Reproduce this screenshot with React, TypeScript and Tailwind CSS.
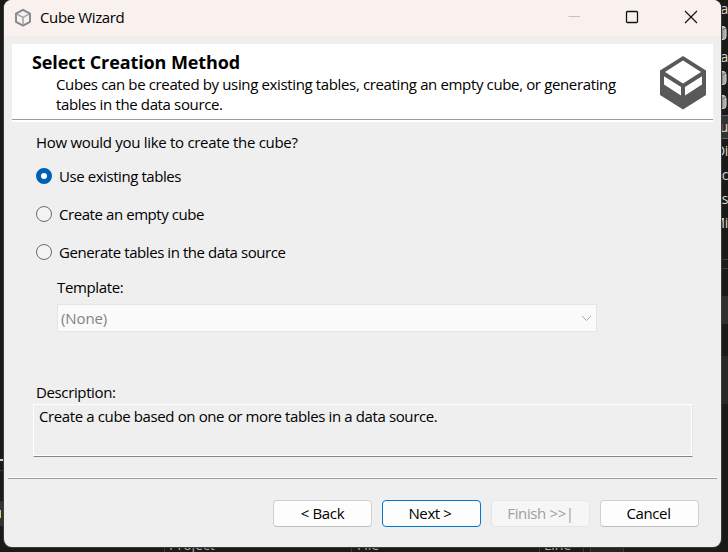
import React from "react";

function TitleCube() {
  return (
    <svg width="18" height="20" viewBox="0 0 18 20" fill="none" stroke="#85878a" strokeLinejoin="round">
      <path d="M9 1.8 16 5.6V13.8L9 17.6 2 13.8V5.6Z" strokeWidth="1.9" />
      <path d="M3 6.2 9 9.4 15 6.2M9 9.4V16.5" strokeWidth="1.5" stroke="#a0a2a5" />
    </svg>
  );
}

function HeaderCube() {
  return (
    <svg width="46" height="54" viewBox="0 0 46 54">
      <path d="M23 0 46 14.5V39L23 53.5 0 39V14.5Z" fill="#58595b" />
      <path d="M23 4.5 41 16 23 27.5 5 16Z" fill="#fff" />
      <path d="M4 20.2 21 31V39.4L4 28.6Z" fill="#fff" />
      <path d="M42 20.2 25 31V39.4L42 28.6Z" fill="#fff" />
    </svg>
  );
}

function Radio({ label, checked }: { label: string; checked?: boolean }) {
  return (
    <div className="flex h-[38px] items-center gap-[7px]">
      <span
        className={
          checked
            ? "size-4 shrink-0 rounded-full border-[5px] border-[#005fb8] bg-white"
            : "size-4 shrink-0 rounded-full border border-[#6c6c6c] bg-[#f3f3f3]"
        }
      />
      <span className="tracking-[-0.43px]">{label}</span>
    </div>
  );
}

function TreeCube() {
  return (
    <svg width="10" height="16" viewBox="0 0 10 16">
      <rect x="-4" y="1.5" width="12" height="13" rx="3" fill="#a8a8a8" stroke="#d8d8d8" strokeWidth="1" />
      <path d="M-4 5H4L8 3M4 5V14" fill="none" stroke="#666" />
    </svg>
  );
}

function Desktop() {
  return (
    <div className="absolute inset-0 flex flex-col bg-[#1a1a19] text-[#d8d8d8]">
      <div className="flex h-[547px] justify-between">
        <div className="flex w-1 flex-col pt-[459px]">
          <div className="h-[2px] bg-[#d0d0d0]" />
          <div className="mt-[9px] h-px bg-[#3a3a3a]" />
          <div className="mt-[30px] flex h-[25px] items-center justify-between bg-[#333]">
            <div className="h-2 w-px bg-[#c9d98b]" />
            <div className="h-2 w-px bg-[#5b93b8]" />
          </div>
        </div>
        <div className="flex w-[22px] flex-col items-end text-[14px] leading-[18px]">
          <div className="flex h-[18px] items-center">Da</div>
          <div className="flex h-[29px] items-center"><TreeCube /></div>
          <div className="flex h-[19px] items-center">Da</div>
          <div className="flex h-6 items-center"><TreeCube /></div>
          <div className="flex h-6 items-center"><TreeCube /></div>
          <div className="mt-px flex h-6 w-full items-center justify-end border-y border-[#666] bg-[#333]">u</div>
          <div className="flex h-6 items-center">Di</div>
          <div className="flex h-6 items-center">Ac</div>
          <div className="flex h-6 items-center">As</div>
          <div className="flex h-6 items-center">Mi</div>
          <div className="mt-6 h-[10px] w-full border-y border-[#3c3c3c]" />
          <div className="mt-[27px] h-7 w-full bg-[#30302f]" />
          <div className="mt-8 h-12 w-full bg-[#282827]" />
        </div>
      </div>
      <div className="flex h-[5px] items-end pl-[164px] text-[14px] leading-[14px] tracking-normal text-[#aaa]">
        <div className="w-[187px] border-l border-[#3a3a3a] pl-1">Project</div>
        <div className="w-[188px] border-l border-[#3a3a3a] pl-[5px]">File</div>
        <div className="w-[45px] border-x border-[#3a3a3a] pl-1">Line</div>
        <div className="ml-[6px] h-[5px] w-[34px] border-x border-[#3a3a3a] bg-[#242424]" />
      </div>
    </div>
  );
}

export default function App() {
  return (
    <div className="relative h-[552px] w-[728px] overflow-hidden whitespace-nowrap font-['Open_Sans','Noto_Sans',sans-serif] text-[15px] leading-[20px] tracking-[-0.37px] text-black">
      <Desktop />
      <div className="absolute left-1 top-0 flex h-[547px] w-[717px] flex-col overflow-hidden rounded-[8px] bg-[#efefef] shadow-[0_0_0_1px_#3b3b3a]">
        <div className="flex h-9 shrink-0 items-center bg-[#f9f1ee] pl-[10px] pr-[11px]">
          <TitleCube />
          <span className="ml-2 flex-1 pb-[2px]">Cube Wizard</span>
          <svg width="142" height="20" viewBox="0 0 142 20" fill="none" stroke="#111">
            <path d="M.5 8.5H12" stroke="#c8c1be" />
            <rect x="58.5" y="3.5" width="11" height="11" rx="1" strokeWidth="1.3" />
            <path d="m117 3 12 12M129 3l-12 12" strokeWidth="1.2" />
          </svg>
        </div>

        <div className="mx-2 mt-2 flex h-[78px] shrink-0 flex-col bg-white">
          <div className="flex h-[75px] justify-between pl-5">
            <div className="pt-[8px]">
              <h1 className="text-[18px] font-bold leading-[20px] tracking-[-0.1px]">Select Creation Method</h1>
              <p className="pl-6 pt-[2px] tracking-[-0.36px]">
                Cubes can be created by using existing tables, creating an empty cube, or generating
                <br />
                tables in the data source.
              </p>
            </div>
            <div className="mr-[7px] mt-3">
              <HeaderCube />
            </div>
          </div>
          <div className="h-px bg-[#9c9c9c]" />
        </div>

        <div className="flex h-[355px] shrink-0 flex-col pl-8 pt-[10px]">
          <p className="mb-[5px] tracking-[-0.3px]">How would you like to create the cube?</p>
          <Radio label="Use existing tables" checked />
          <Radio label="Create an empty cube" />
          <Radio label="Generate tables in the data source" />
          <p className="ml-[21px] mt-[6px]">Template:</p>
          <div className="ml-[21px] mt-[7px] flex h-7 w-[540px] items-center justify-between border border-[#e5e5e5] bg-[#fafafa] pl-[3px] pr-1 text-[#838383]">
            <span className="tracking-[-0.1px]">(None)</span>
            <svg width="11" height="7" viewBox="0 0 11 7" fill="none" stroke="#aaa">
              <path d="m1 1 4.5 4.5L10 1" />
            </svg>
          </div>
          <p className="mt-[50px]">Description:</p>
          <div className="-ml-[3px] mt-[2px] h-[53px] w-[660px] border border-b-[#858585] border-l-white border-r-[#e4e4e4] border-t-white pl-[5px] pt-px tracking-[-0.38px] shadow-[inset_-1px_-1px_0_#fff]">
            Create a cube based on one or more tables in a data source.
          </div>
        </div>

        <div className="mx-1 h-[2px] shrink-0 border-b border-t border-b-[#9c9c9c] border-t-white" />
        <div className="flex justify-end gap-[10px] pr-[22px] pt-[21px]">
          <button className="h-[27px] w-[99px] rounded-[4px] border border-[#d0d0d0] border-b-[#bcbcbc] bg-[#fdfdfd] pb-[2px]">&lt; Back</button>
          <button className="h-[27px] w-[99px] rounded-[4px] border border-[#0078d4] bg-[#fdfdfd] pb-[2px] pr-[3px]">Next &gt;</button>
          <button className="h-[27px] w-[99px] rounded-[4px] border border-[#e5e5e5] bg-[#f6f6f6] pb-[2px] text-[#a0a0a0]">Finish &gt;&gt;|</button>
          <button className="h-[27px] w-[99px] rounded-[4px] border border-[#d0d0d0] border-b-[#bcbcbc] bg-[#fdfdfd] pb-[2px] pr-[2px]">Cancel</button>
        </div>
      </div>
    </div>
  );
}
